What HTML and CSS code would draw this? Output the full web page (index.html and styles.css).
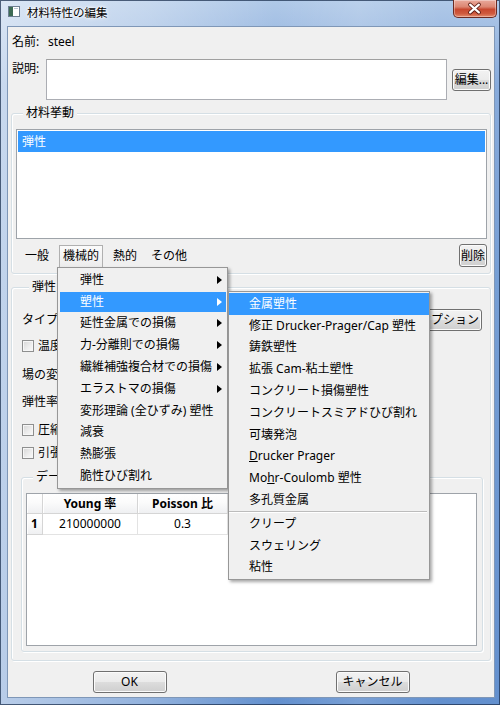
FILE: index.html
```html
<!DOCTYPE html>
<html lang="ja">
<head>
<meta charset="utf-8">
<title>材料特性の編集</title>
<link rel="stylesheet" href="styles.css">
</head>
<body>
<div class="window">
  <div class="titlebar">
    <svg class="app-icon" width="12" height="11" viewBox="0 0 12 11">
      <rect x="0.5" y="0.5" width="11" height="10" fill="#ffffff" stroke="#6d7f92"/>
      <rect x="1" y="1" width="4" height="9" fill="#3d6b55"/>
      <rect x="6" y="2" width="4" height="1" fill="#b9c6d3"/>
    </svg>
    <span class="title">材料特性の編集</span>
    <div class="close-btn">
      <svg width="44" height="18" viewBox="0 0 44 18">
        <path d="M17.5 4.5 L26.5 12.5 M26.5 4.5 L17.5 12.5" stroke="#5a1a12" stroke-width="4" stroke-linecap="round"/>
        <path d="M17.5 4.5 L26.5 12.5 M26.5 4.5 L17.5 12.5" stroke="#ffffff" stroke-width="2.2" stroke-linecap="round"/>
      </svg>
    </div>
  </div>
  <div class="client">
    <div class="name-row"><span class="label-name">名前:</span><span>steel</span></div>
    <div class="desc-row">
      <span class="label-desc">説明:</span>
      <div class="textbox"></div>
      <button class="btn btn-edit">編集...</button>
    </div>
    <div class="group group-behavior">
      <div class="group-title">材料挙動</div>
      <div class="listbox"><div class="list-item selected">弾性</div></div>
      <div class="menu-row">
        <div class="menubar">
          <span class="mb-item">一般</span>
          <span class="mb-item open">機械的</span>
          <span class="mb-item">熱的</span>
          <span class="mb-item">その他</span>
        </div>
        <button class="btn btn-delete">削除</button>
      </div>
    </div>
    <div class="group group-elastic">
      <div class="group-title">弾性</div>
      <div class="options-grid">
        <div class="opt-row opt-type"><span>タイプ: 等方性</span><button class="btn btn-option">オプション</button></div>
        <div class="opt-row"><span class="checkbox"></span>温度依存データを使用</div>
        <div class="opt-row">場の変数の数: 0</div>
        <div class="opt-row">弾性率の時間スケール (粘弾性用): 長期</div>
        <div class="opt-row"><span class="checkbox"></span>圧縮なし</div>
        <div class="opt-row"><span class="checkbox"></span>引張なし</div>
      </div>
      <div class="group group-data">
        <div class="group-title">データ</div>
        <div class="table-wrap">
          <div class="data-grid">
            <div class="hcell"></div>
            <div class="hcell">Young 率</div>
            <div class="hcell">Poisson 比</div>
            <div class="hcell">1</div>
            <div class="dcell">210000000</div>
            <div class="dcell">0.3</div>
          </div>
        </div>
      </div>
    </div>
    <div class="dialog-buttons">
      <div class="btn-cell"><button class="btn btn-dialog">OK</button></div>
      <div class="btn-cell"><button class="btn btn-dialog">キャンセル</button></div>
    </div>
  </div>

  <div class="menu menu-main">
    <div class="menu-item"><span>弾性</span><span class="arrow"></span></div>
    <div class="menu-item active"><span>塑性</span><span class="arrow"></span></div>
    <div class="menu-item"><span>延性金属での損傷</span><span class="arrow"></span></div>
    <div class="menu-item"><span>力-分離則での損傷</span><span class="arrow"></span></div>
    <div class="menu-item"><span>繊維補強複合材での損傷</span><span class="arrow"></span></div>
    <div class="menu-item"><span>エラストマの損傷</span><span class="arrow"></span></div>
    <div class="menu-item"><span>変形理論 (全ひずみ) 塑性</span></div>
    <div class="menu-item"><span>減衰</span></div>
    <div class="menu-item"><span>熱膨張</span></div>
    <div class="menu-item"><span>脆性ひび割れ</span></div>
  </div>

  <div class="menu menu-sub">
    <div class="menu-item active"><span>金属塑性</span></div>
    <div class="menu-item"><span>修正 Drucker-Prager/Cap 塑性</span></div>
    <div class="menu-item"><span>鋳鉄塑性</span></div>
    <div class="menu-item"><span>拡張 Cam-粘土塑性</span></div>
    <div class="menu-item"><span>コンクリート損傷塑性</span></div>
    <div class="menu-item"><span>コンクリートスミアドひび割れ</span></div>
    <div class="menu-item"><span>可壊発泡</span></div>
    <div class="menu-item"><span><span class="mn">D</span>rucker Prager</span></div>
    <div class="menu-item"><span>Mo<span class="mn">h</span>r-Coulomb 塑性</span></div>
    <div class="menu-item"><span>多孔質金属</span></div>
    <div class="menu-sep"></div>
    <div class="menu-item"><span>クリープ</span></div>
    <div class="menu-item"><span>スウェリング</span></div>
    <div class="menu-item"><span>粘性</span></div>
  </div>
</div>
</body>
</html>
```

FILE: styles.css
```css
* { box-sizing: border-box; }
html, body { margin: 0; padding: 0; }
body {
  width: 500px;
  height: 705px;
  overflow: hidden;
  font-family: "Noto Sans", "Noto Sans CJK JP", sans-serif;
  font-size: 12px;
  color: #000;
  background: #fff;
}

.window {
  position: relative;
  width: 500px;
  height: 705px;
  display: flex;
  flex-direction: column;
  background:
    linear-gradient(to right, rgba(255,255,255,0.55) 0%, rgba(255,255,255,0.3) 30%, rgba(255,255,255,0) 55%, rgba(255,255,255,0.14) 72%, rgba(255,255,255,0) 88%),
    linear-gradient(to bottom, #b0c9e8 0%, #88abdb 12%, #769fd5 40%, #6390ce 100%);
  box-shadow: inset 0 0 0 1px rgba(30, 50, 80, 0.75);
}

.titlebar {
  height: 26px;
  flex-shrink: 0;
  display: flex;
  align-items: flex-start;
  padding-left: 8px;
}
.app-icon { margin-top: 6px; flex-shrink: 0; }
.title {
  margin-left: 7px;
  margin-top: 4px;
  line-height: 16px;
  font-size: 11.5px;
  font-family: "Noto Sans CJK JP", sans-serif;
  text-shadow: 0 0 5px #ffffff, 0 0 3px #ffffff, 0 0 2px rgba(255,255,255,0.8);
}
.close-btn {
  margin-left: auto;
  margin-right: 3px;
  width: 44px;
  height: 18px;
  border: 1px solid #6b2a22;
  border-top: none;
  border-radius: 0 0 5px 5px;
  background: linear-gradient(to bottom, #e9a99b 0%, #dc8672 40%, #c8482f 55%, #cf5a3e 80%, #e58c6e 100%);
  box-shadow: inset 0 0 0 1px rgba(255,255,255,0.35);
  display: flex;
}
.close-btn svg { margin-left: -1px; }

.client {
  flex: 1;
  width: 488px;
  margin: 0 5px 7px 7px;
  background: #f0f0f0;
  border: 1px solid #7f97b7;
  padding: 7px 3px 0 3px;
}

.name-row {
  display: flex;
  height: 16px;
  line-height: 16px;
  padding-left: 1px;
}
.label-name { width: 36px; }

.desc-row {
  display: flex;
  align-items: flex-start;
  margin-top: 9px;
  padding-left: 1px;
}
.label-desc { width: 34px; margin-top: 2px; line-height: 16px; }
.textbox {
  width: 401px;
  height: 41px;
  background: #fff;
  border: 1px solid #abadb3;
  border-top-color: #a0a0a0;
}

.btn {
  font-family: "Noto Sans", "Noto Sans CJK JP", sans-serif;
  font-size: 12px;
  color: #000;
  padding: 0;
  margin: 0;
  border: 1px solid #707070;
  border-radius: 3px;
  background: linear-gradient(to bottom, #f2f2f2 0%, #ebebeb 49%, #dddddd 50%, #cfcfcf 100%);
  box-shadow: inset 0 0 0 1px #fbfbfb;
  line-height: 16px;
  text-align: center;
  white-space: nowrap;
}
.btn-edit { margin-left: 5px; margin-top: 10px; width: 39px; height: 22px; }
.btn-delete { width: 28px; height: 23px; }
.btn-option { width: 66px; height: 22px; margin-right: 1px; }
.btn-dialog { width: 74px; height: 22px; }

.group {
  border: 1px solid #d5dfe5;
  border-radius: 3px;
  box-shadow: inset 1px 1px 0 #ffffff, 1px 1px 0 #ffffff;
}
.group-title {
  width: max-content;
  margin-top: -9px;
  margin-left: 7px;
  padding: 0 3px;
  height: 16px;
  line-height: 16px;
  background: #f0f0f0;
}

.group-behavior { margin-top: 13px; padding: 0 3px 6px 4px; }
.listbox {
  margin-top: 8px;
  height: 110px;
  background: #fff;
  border: 1px solid #9ea3a9;
  padding: 1px;
}
.list-item { height: 21px; line-height: 21px; padding-left: 4px; }
.selected { background: #3399ff; color: #fff; }

.menu-row {
  display: flex;
  justify-content: space-between;
  align-items: flex-start;
  margin-top: 5px;
}
.menubar { display: flex; gap: 6px; margin-left: 5px; margin-top: 1px; }
.mb-item {
  height: 22px;
  line-height: 20px;
  padding: 0 3px;
  border: 1px solid transparent;
  border-bottom: none;
}
.mb-item.open {
  border-color: #b0b0b0;
  background: linear-gradient(to bottom, #fbfbfb, #ececec);
}

.group-elastic { margin-top: 13px; padding: 0 7px 8px 10px; }
.options-grid {
  margin-top: 14px;
  display: grid;
  grid-template-rows: 22px 30px 28px 26px 30px 16px;
}
.opt-row {
  display: flex;
  align-items: center;
  line-height: 16px;
  white-space: nowrap;
}
.opt-type { justify-content: space-between; }
.checkbox {
  width: 12px;
  height: 12px;
  flex-shrink: 0;
  margin-right: 4px;
  border: 1px solid #8e8f8f;
  background: linear-gradient(135deg, #d6d6d6 0%, #eeeeee 60%, #fafafa 100%);
  box-shadow: inset 0 0 0 1px #f6f6f6;
}

.group-data { margin-top: 16px; margin-left: -1px; padding: 0 5px 5px 4px; }
.table-wrap {
  margin-top: 8px;
  height: 153px;
  background: #fff;
  border: 1px solid #9ea3a9;
  overflow: hidden;
}
.data-grid {
  display: grid;
  grid-template-columns: 16px 95px 90px;
  grid-template-rows: 20px 21px;
  width: max-content;
}
.hcell {
  font-weight: bold;
  text-align: center;
  line-height: 19px;
  border-right: 1px solid #d5d5d5;
  border-bottom: 1px solid #d5d5d5;
  background: linear-gradient(to bottom, #ffffff 0%, #fbfbfb 45%, #eff0f2 100%);
  box-shadow: inset 1px 0 0 #ffffff;
}
.dcell {
  text-align: center;
  line-height: 20px;
  border-right: 1px solid #e3e3e3;
  border-bottom: 1px solid #e3e3e3;
}

.dialog-buttons {
  display: grid;
  grid-template-columns: 1fr 1fr;
  margin: 10px -3px 0 -3px;
}
.btn-cell { display: flex; justify-content: center; }

.menu {
  position: absolute;
  display: flex;
  flex-direction: column;
  background: #f0f0f0;
  border: 1px solid #979797;
  box-shadow: 2px 2px 3px rgba(0, 0, 0, 0.35);
}
.menu-main { left: 57px; top: 267px; width: 171px; padding: 1px 1px 1px 2px; }
.menu-sub { left: 228px; top: 291px; width: 202px; padding: 1px 0; }
.menu-item {
  flex-shrink: 0;
  height: 21.8px;
  display: flex;
  align-items: center;
  justify-content: space-between;
  padding: 0 4px 0 20px;
  line-height: 16px;
  white-space: nowrap;
}
.menu-item.active { background: #3399ff; color: #fff; }
.menu-main .menu-item.active {
  background: linear-gradient(#3399ff, #3399ff) 0 1px / 100% calc(100% - 2px) no-repeat;
}
.arrow {
  width: 0;
  height: 0;
  border-left: 5px solid #000;
  border-top: 4px solid transparent;
  border-bottom: 4px solid transparent;
}
.active .arrow { border-left-color: #fff; }
.menu-sep {
  flex-shrink: 0;
  height: 2px;
  margin-right: 2px;
  border-top: 1px solid #bcbcbc;
  border-bottom: 1px solid #ffffff;
}
.mn { text-decoration: underline; }
```
